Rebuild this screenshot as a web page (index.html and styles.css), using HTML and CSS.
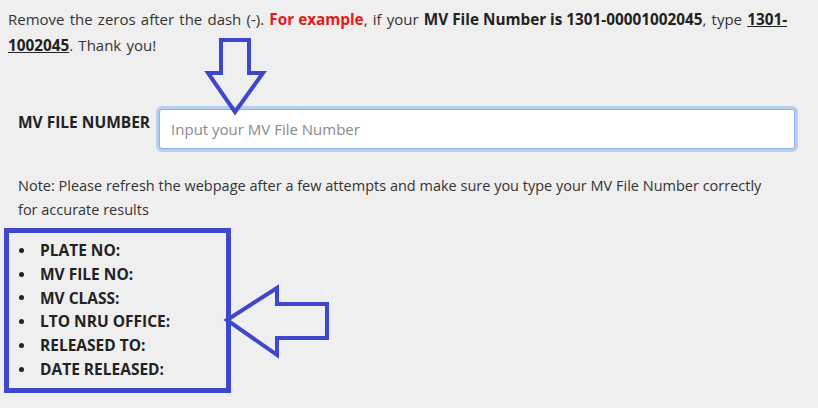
FILE: index.html
```html
<!DOCTYPE html>
<html lang="en">
<head>
  <meta charset="UTF-8" />
  <title>MV File Number Lookup</title>
  <link rel="stylesheet" href="styles.css">
</head>
<body>
  <div class="page">
    <p class="intro">
      Remove the zeros after the dash (-). <strong class="red">For example</strong>, if your <strong>MV File Number is 1301-00001002045</strong>, type <strong class="u">1301-<br>1002045</strong>. Thank you!
    </p>

    <div class="field">
      <label for="mv_file">MV FILE NUMBER</label>
      <input type="text" id="mv_file" placeholder="Input your MV File Number">
    </div>

    <p class="note">
      Note: Please refresh the webpage after a few attempts and make sure you type your MV File Number correctly<br>for accurate results
    </p>

    <ul class="result">
      <li>PLATE NO:</li>
      <li>MV FILE NO:</li>
      <li>MV CLASS:</li>
      <li>LTO NRU OFFICE:</li>
      <li>RELEASED TO:</li>
      <li>DATE RELEASED:</li>
    </ul>

    <!-- annotation arrows drawn over the page -->
    <svg class="marks" width="818" height="408" viewBox="0 0 818 408">
      <polygon points="221,40 249,40 249,73 263,73 235,112 208,73 221,73" />
      <polygon points="227,320 277,288 277,304 327,304 327,338 277,338 277,355" />
    </svg>
  </div>
</body>
</html>
```

FILE: styles.css
```css
* {
  box-sizing: border-box;
}

body, html {
  margin: 0;
  padding: 0;
  background-color: #efefef;
  font-family: 'Open Sans', 'Liberation Sans', sans-serif;
  color: #333;
}

.page {
  position: relative;
  width: 818px;
  height: 408px;
  padding-top: 6px;
  overflow: hidden;
}

p {
  margin: 0;
}

.intro {
  padding-left: 8px;
  font-size: 15px;
  line-height: 26px;
  word-spacing: 1.3px;
}

.intro strong {
  font-size: 15.3px;
  word-spacing: 0;
  color: #222;
}

.intro .red {
  color: #e01b1b;
}

.intro .u {
  text-decoration: underline;
}

.field {
  display: flex;
  align-items: flex-start;
  gap: 9px;
  margin-top: 51px;
  padding-left: 18px;
}

label {
  font-weight: bold;
  font-size: 15.5px;
  color: #222;
  padding-top: 2px;
}

input {
  width: 636px;
  height: 40px;
  padding: 0 11px;
  border: 1px solid #8fb0e0;
  border-radius: 3px;
  box-shadow: 0 0 0 3px rgba(160, 192, 238, 0.7);
  background: #fff;
  font-family: inherit;
  font-size: 15px;
  color: #333;
  outline: none;
}

input::placeholder {
  color: #8a8a8a;
}

.note {
  margin-top: 25px;
  padding-left: 18px;
  font-size: 14.5px;
  line-height: 24px;
}

.result {
  width: 227px;
  margin: 6px 0 0 4px;
  padding: 6px 0 6px 10px;
  border: 5px solid #3f48cc;
  list-style: none;
  font-weight: bold;
  font-size: 15.5px;
  line-height: 23.8px;
  color: #222;
}

.result li::before {
  content: "";
  display: inline-block;
  width: 5px;
  height: 5px;
  margin: 0 16px 3px 0;
  border-radius: 50%;
  background: #222;
  vertical-align: middle;
}

.marks {
  position: absolute;
  left: 0;
  top: 0;
  pointer-events: none;
}

.marks polygon {
  fill: none;
  stroke: #3f48cc;
  stroke-width: 4;
  stroke-linejoin: miter;
}
```
